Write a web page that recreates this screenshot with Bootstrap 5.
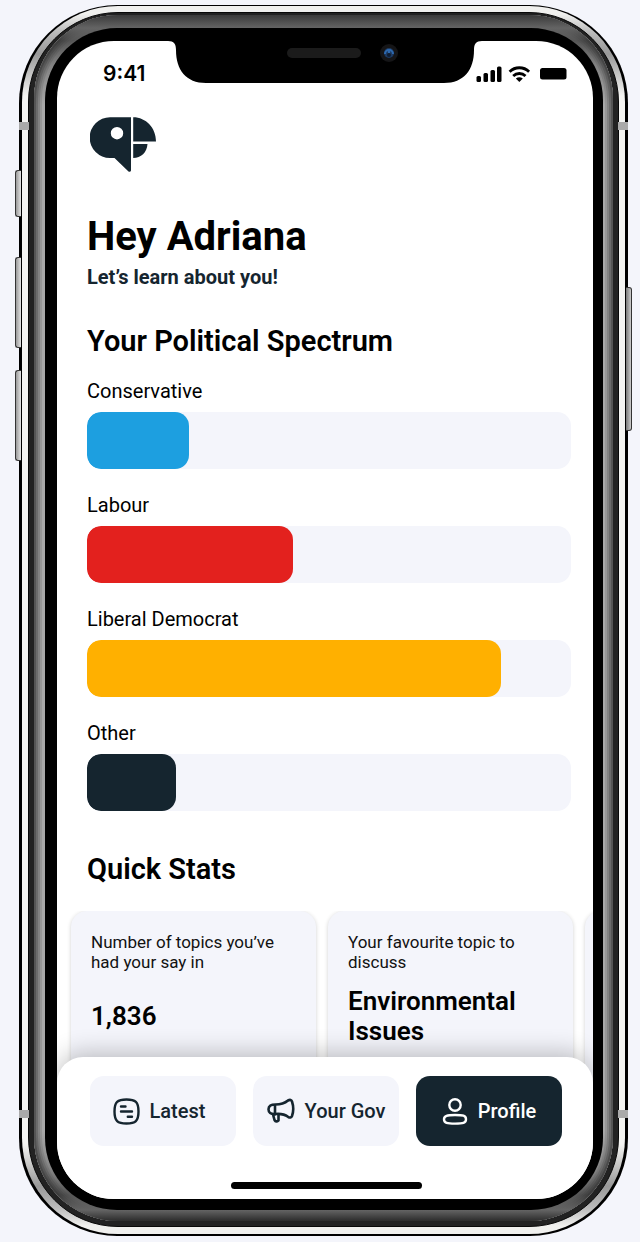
<!DOCTYPE html>
<html lang="en">
<head>
<meta charset="utf-8">
<meta name="viewport" content="width=device-width, initial-scale=1">
<title>Profile</title>
<link href="https://cdn.jsdelivr.net/npm/bootstrap@5.3.0/dist/css/bootstrap.min.css" rel="stylesheet">
<style>
:root{--ink:#15252f;--mist:#f4f5fb}
body{background:var(--mist);font-family:Roboto,"Liberation Sans",sans-serif;color:#000;padding:5px 12px 6px 19px}
/* Device shell, from the outer rim inwards */
.rim{position:relative;background:#000;border-radius:98px;padding:1px 3px 2px}
.steel{position:relative;background:linear-gradient(#f0f0ee 0,#f0f0ee 8px,#bbb 26px,#999 48px,#f4f4f2 90px,#f4f4f2 calc(100% - 90px),#999 calc(100% - 48px),#bbb calc(100% - 26px),#f0f0ee calc(100% - 8px));border-radius:96px;padding:6px 6px 7px}
.gasket{background:#222;border:1px solid #080808;border-radius:90px;padding:2px 5px 5px}
.bevel{position:relative;border-radius:84px;padding:13px 10px 11px 11px;background:#b4b4b4;
 box-shadow:inset 0 0 0 2px #555,inset 0 0 0 4px #6c6c6c,inset 0 0 0 6px #828282,inset 0 0 0 8px #969696,inset 0 0 0 11px #a8a8a8}
.bevel::before{content:"";position:absolute;inset:0;border-radius:inherit;
 background:linear-gradient(#3a3a3a 0,#646464 13px,rgba(50,50,50,.7) 26px,rgba(40,40,40,.3) 50px,transparent 90px,transparent calc(100% - 90px),rgba(40,40,40,.3) calc(100% - 50px),rgba(50,50,50,.7) calc(100% - 26px),#646464 calc(100% - 11px),#2c2c2c 100%)}
.glass{position:relative;background:#000;border-radius:72px;padding:13px 10px 11px 12px}
.display{position:relative;background:#fff;border-radius:57px;overflow:hidden}
.key{position:absolute;left:-4px;width:6px;border:1px solid #333;border-right:0;border-radius:3px 0 0 3px;background:linear-gradient(90deg,#999,#e4e4e4)}
.key.power{left:auto;right:-4px;border:1px solid #333;border-left:0;border-radius:0 3px 3px 0;background:linear-gradient(90deg,#777,#ccc)}
.seam{position:absolute;height:8px;width:10px;background:#aaa}
.notch{position:absolute;top:0;left:50%;margin-left:-157px;z-index:2}
.status{height:64px;padding:2px 26px 0 46px}
.clock{font:600 21px/28px Inter,Roboto,sans-serif}
.content{padding:12px 22px 0 30px}
.logo{display:block;margin-left:3px}
h1{font-size:40px;line-height:48px;font-weight:700;margin:40px 0 0}
.tagline{font-size:20px;line-height:24px;font-weight:700;color:var(--ink);margin:4px 0 0}
h2{font-size:29px;line-height:34px;font-weight:600;margin:35px 0 21px}
.stats-title{margin:41px 0 25px}
.meter-label{display:block;font-size:20px;line-height:24px;margin-bottom:9px}
.progress{height:57px;border-radius:14px;background:var(--mist);margin-bottom:24px}
.progress-bar{border-radius:14px}
.c-con{background:#1d9fe0}.c-lab{background:#e3211e}.c-lib{background:#ffb000}.c-oth{background:var(--ink)}
.stats{gap:12px;padding:0 0 0 14px;height:170px;overflow:hidden}
.stat{flex:0 0 245px;height:190px;background:var(--mist);border:0;border-radius:16px;box-shadow:0 1px 4px rgba(0,0,0,.18);padding:21px 20px}
.stat p{font-size:17px;line-height:20px;margin:0 0 14px;color:#111}
.figure-text{font-size:26px;line-height:30px;min-height:60px;font-weight:600}
.tabbar{position:relative;margin-top:-24px;background:#fff;border-radius:26px 26px 0 0;box-shadow:0 -4px 24px rgba(0,0,0,.24);padding:19px 31px 10px 33px}
.tabs{grid-template-columns:repeat(3,minmax(0,1fr));gap:17px}
.tab{--bs-btn-bg:var(--mist);--bs-btn-color:var(--ink);--bs-btn-hover-bg:#e6e8f2;--bs-btn-active-bg:var(--ink);--bs-btn-active-color:#fff;height:70px;border:0;border-radius:14px;padding:0;font-size:20px;line-height:24px;font-weight:500;gap:10px;white-space:nowrap}
.home{width:191px;height:7px;border-radius:4px;background:#000;margin:36px auto 0}
</style>
</head>
<body>
<div class="rim">
 <span class="key" style="top:165px;height:47px"></span>
 <span class="key" style="top:252px;height:91px"></span>
 <span class="key" style="top:365px;height:91px"></span>
 <span class="key power" style="top:282px;height:144px"></span>
 <div class="steel">
  <div class="gasket"><div class="bevel"><div class="glass">
   <main class="display">
    <svg class="notch" width="314" height="43" viewBox="0 0 314 43" aria-hidden="true">
     <path d="M0 0C6 0 8 3 8 9C8 29 18 42 38 42H276C296 42 306 29 306 9C306 3 308 0 314 0Z" fill="#000"/>
     <rect x="119" y="7" width="74" height="10" rx="5" fill="#1b1b1b"/>
     <circle cx="221" cy="12" r="9" fill="#151517"/><circle cx="221" cy="12" r="5" fill="#1c3a63"/>
     <path d="M217 13a4 4 0 0 1 8 0M221 9v3" fill="none" stroke="#2d68ad" stroke-width="2"/><circle cx="221" cy="14" r="2" fill="#101d31"/>
    </svg>
    <div class="status d-flex justify-content-between align-items-center">
     <span class="clock">9:41</span>
     <svg width="91" height="20" viewBox="476 62 91 20" aria-hidden="true">
      <rect x="476.500" y="74" width="4.500" height="6" rx="1.500"/><rect x="483.500" y="71" width="4.500" height="9" rx="1.500"/><rect x="490.500" y="68" width="4.500" height="12" rx="1.500"/><rect x="497" y="64.500" width="4.500" height="15.500" rx="1.500"/>
      <g fill="none" stroke="#000" stroke-width="2.800"><path d="M509.600 69.700a14 14 0 0 1 19.500 0"/><path d="M513.200 74a8.800 8.800 0 0 1 12.300 0"/></g><path d="M515.800 76.600q3.500-2.600 7 0l-3.500 3.500z"/>
      <rect x="540" y="66" width="26.500" height="11.500" rx="2.500"/>
     </svg>
    </div>
    <div class="content">
     <svg class="logo" width="67" height="56" viewBox="90 117 67 56" role="img" aria-label="Parrot logo" fill="#15252f">
      <path fill-rule="evenodd" d="M110 117.300H131V170.500Q130.500 172.500 128.500 171.500L114.500 158H110A20.350 20.350 0 0 1 110 117.300ZM117 127a6.200 6.200 0 1 0 0 12.400a6.200 6.200 0 0 0 0-12.400Z"/>
      <path d="M133.200 117.300C146 117.300 156 128 156 141.500H133.200ZM133.200 144H147.500C147 152.500 141 158 133.200 158Z"/>
     </svg>
     <h1>Hey Adriana</h1>
     <p class="tagline">Let’s learn about you!</p>
     <h2>Your Political Spectrum</h2>
     <span class="meter-label" id="m1">Conservative</span>
     <div class="progress" role="progressbar" aria-labelledby="m1" aria-valuenow="21" aria-valuemin="0" aria-valuemax="100"><div class="progress-bar c-con" style="width:21%"></div></div>
     <span class="meter-label" id="m2">Labour</span>
     <div class="progress" role="progressbar" aria-labelledby="m2" aria-valuenow="42.5" aria-valuemin="0" aria-valuemax="100"><div class="progress-bar c-lab" style="width:42.5%"></div></div>
     <span class="meter-label" id="m3">Liberal Democrat</span>
     <div class="progress" role="progressbar" aria-labelledby="m3" aria-valuenow="85.5" aria-valuemin="0" aria-valuemax="100"><div class="progress-bar c-lib" style="width:85.5%"></div></div>
     <span class="meter-label" id="m4">Other</span>
     <div class="progress" role="progressbar" aria-labelledby="m4" aria-valuenow="18.3" aria-valuemin="0" aria-valuemax="100"><div class="progress-bar c-oth" style="width:18.3%"></div></div>
     <h2 class="stats-title">Quick Stats</h2>
    </div>
    <section class="stats d-flex" aria-label="Quick Stats">
     <article class="card stat"><p>Number of topics you’ve had your say in</p><div class="figure-text d-flex align-items-center">1,836</div></article>
     <article class="card stat"><p>Your favourite topic to discuss</p><div class="figure-text d-flex align-items-center">Environmental Issues</div></article>
     <article class="card stat"></article>
    </section>
    <nav class="tabbar" aria-label="Main">
     <div class="tabs d-grid">
      <button type="button" class="btn tab d-flex align-items-center justify-content-center pe-2">
       <svg width="27" height="27" viewBox="0 0 27 27" fill="none" stroke="currentColor" stroke-width="2.400" stroke-linecap="round" aria-hidden="true"><path d="M13.500 1.500C22.500 1.500 25.500 4 25.500 13.500S22.500 25.500 13.500 25.500S1.500 23 1.500 13.500S4.500 1.500 13.500 1.500ZM8 8.500h4.500M8 13.500h11M14.800 18.800h4.200"/></svg>Latest</button>
      <button type="button" class="btn tab d-flex align-items-center justify-content-center">
       <svg width="28" height="26" viewBox="0 0 28 26" fill="none" stroke="currentColor" stroke-width="2.600" stroke-linejoin="round" stroke-linecap="round" aria-hidden="true"><path d="M8.500 6.500C14 6.500 18 5 21 2.500Q24 .8 25 3.500Q27.500 11 25 18Q24 20.500 21 18.800C18 16.500 14 15.500 8.500 16C3.500 16.500 1.500 14.500 1.500 11.200S4 6.500 8.500 6.500ZM8 7V16.500M6 16.500L7.500 22Q9 24.500 11.500 22.500V16.300"/></svg>Your Gov</button>
      <button type="button" class="btn tab active d-flex align-items-center justify-content-center" aria-current="page">
       <svg width="26" height="28" viewBox="0 0 26 28" fill="none" stroke="currentColor" stroke-width="2.400" aria-hidden="true"><circle cx="13" cy="8" r="5.700"/><path d="M13 18C21 18 24 18.500 24 22.300S21 26.600 13 26.600S2 26 2 22.300S5 18 13 18Z"/></svg>Profile</button>
     </div>
     <div class="home"></div>
    </nav>
   </main>
  </div></div></div>
 </div>
 <span class="seam" style="left:0;top:117px"></span><span class="seam" style="right:0;top:117px"></span>
 <span class="seam" style="left:0;bottom:118px"></span><span class="seam" style="right:0;bottom:118px"></span>
</div>
<script src="https://cdn.jsdelivr.net/npm/bootstrap@5.3.0/dist/js/bootstrap.bundle.min.js"></script>
</body>
</html>
